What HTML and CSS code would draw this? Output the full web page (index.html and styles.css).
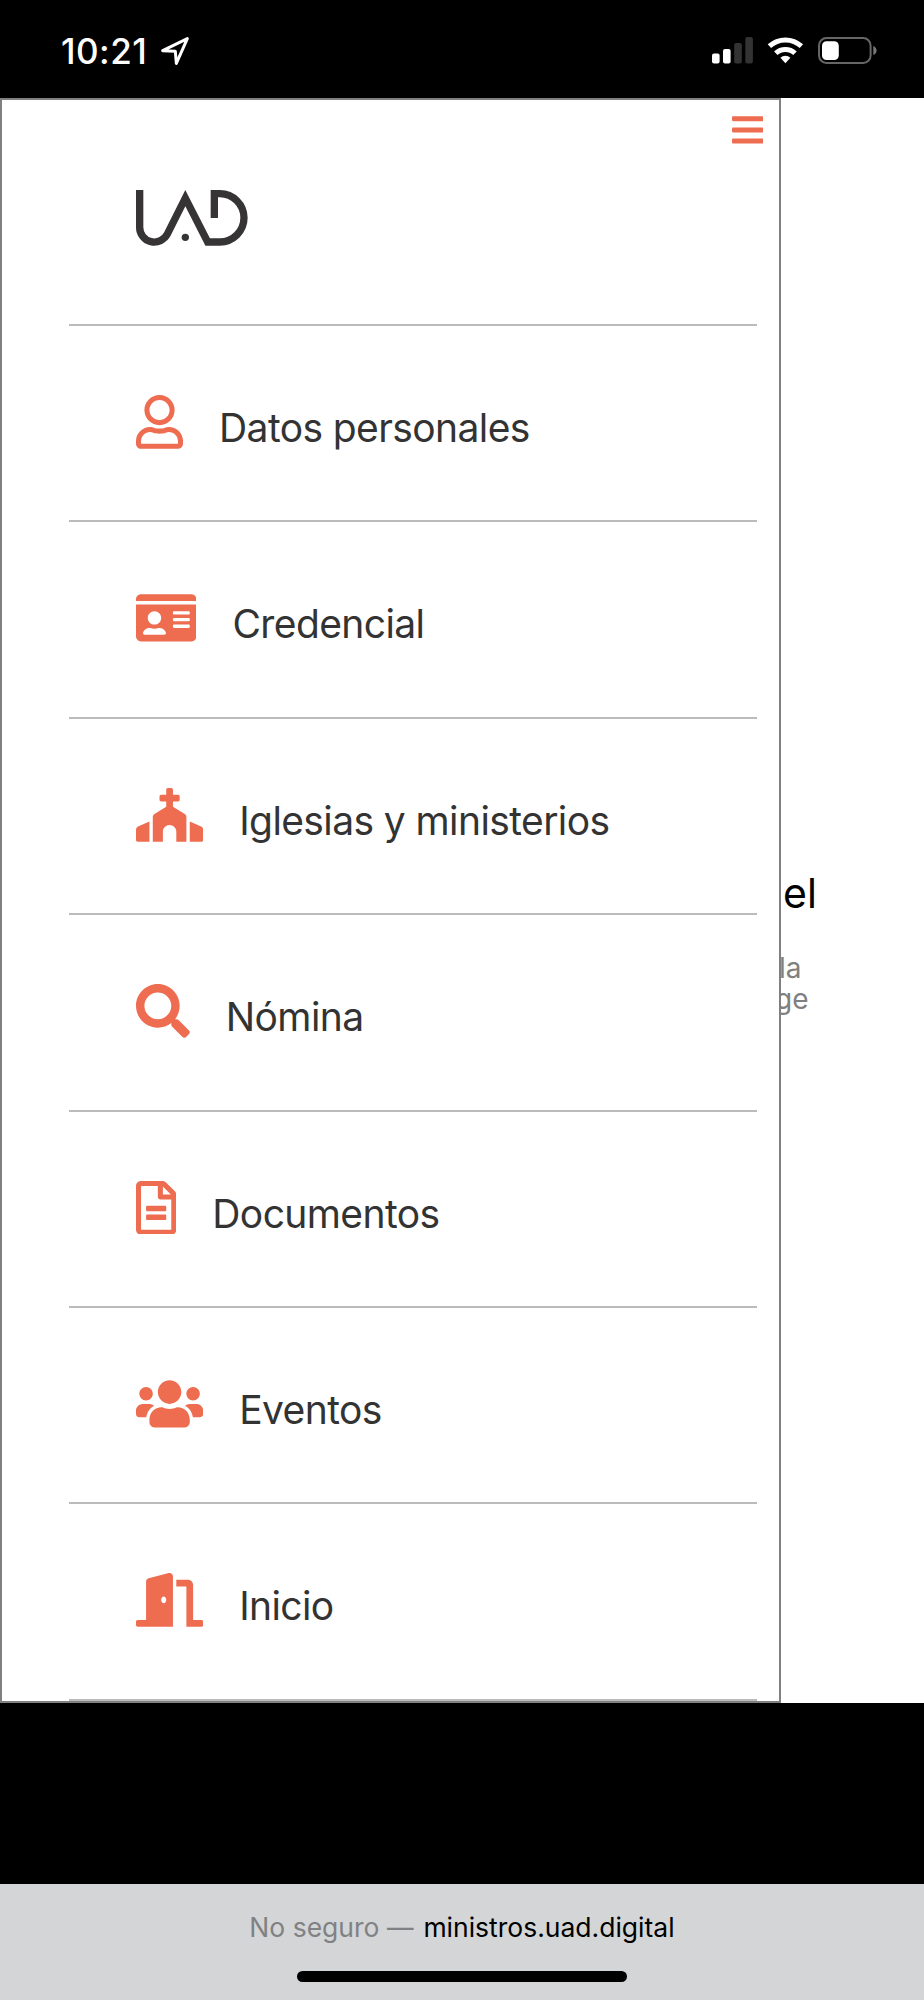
FILE: index.html
```html
<!DOCTYPE html>
<html lang="es">
<head>
<meta charset="utf-8">
<title>Ministros UAD</title>
<link rel="stylesheet" href="styles.css">
</head>
<body>
<header class="status">
  <span class="time">10:21</span>
  <svg class="locate" viewBox="0 0 90 90"><path d="M8 44 L82 8 L49 82 L46 46 Z" fill="none" stroke="#fff" stroke-width="9" stroke-linejoin="round"/></svg>
  <svg class="signals" viewBox="0 0 166 28">
    <g fill="#fff"><rect x="0" y="16.5" width="7.6" height="10" rx="2"/><rect x="11" y="12" width="7.6" height="14.5" rx="2"/></g>
    <g fill="#333"><rect x="22.2" y="6" width="7.6" height="20.5" rx="2"/><rect x="33.3" y="0" width="7.6" height="26.5" rx="2"/></g>
    <g fill="none" stroke="#fff" stroke-width="5"><path d="M57.4 9.2 A23.5 23.5 0 0 1 89.4 9.2"/><path d="M63.8 16.2 A14 14 0 0 1 83 16.2"/></g>
    <path d="M73.4 26.2 L68.4 20.7 A7.5 7.5 0 0 1 78.4 20.7 Z" fill="#fff"/>
    <rect x="107" y="1" width="51.6" height="25" rx="7.5" fill="none" stroke="#666" stroke-width="2"/>
    <rect x="110" y="4.2" width="16.8" height="18.8" rx="4.5" fill="#fff"/>
    <path d="M161.3 9 Q164.6 10.5 164.6 13.5 T161.3 18 Z" fill="#777"/>
  </svg>
</header>
<main class="page">
  <section class="behind">
    <h1 class="behind-title">el</h1>
    <p class="behind-text"><span class="line line-first">la</span><span class="line">ge</span></p>
  </section>
  <nav class="drawer">
    <div class="drawer-top">
      <svg class="bars" viewBox="0 0 448 512"><rect y="60" width="448" height="72" rx="16"/><rect y="220" width="448" height="72" rx="16"/><rect y="380" width="448" height="72" rx="16"/></svg>
      <svg class="logo" viewBox="259 90 336 168"><path d="M270 90 V202 A44 44 0 0 0 353.3 221.9 L407 114.5 L474 246 H510.5 A72.5 72.5 0 0 0 510.5 101 H494 V174" fill="none" stroke="#373435" stroke-width="22"/><circle cx="407" cy="232" r="11" fill="#373435"/></svg>
    </div>
    <ul class="menu">
      <li class="item"><svg class="icon" viewBox="0 0 448 512"><path d="M313.6 304c-28.7 0-42.5 16-89.6 16-47.1 0-60.8-16-89.6-16C60.2 304 0 364.2 0 438.4V464c0 26.5 21.5 48 48 48h352c26.5 0 48-21.5 48-48v-25.6c0-74.2-60.2-134.4-134.4-134.4zM400 464H48v-25.6c0-47.6 38.8-86.4 86.4-86.4 14.6 0 38.3 16 89.6 16 51.7 0 74.9-16 89.6-16 47.6 0 86.4 38.8 86.4 86.4V464zM224 288c79.5 0 144-64.5 144-144S303.5 0 224 0 80 64.5 80 144s64.5 144 144 144zm0-240c52.9 0 96 43.1 96 96s-43.1 96-96 96-96-43.1-96-96 43.1-96 96-96z"/></svg><span class="label">Datos personales</span></li>
      <li class="item"><svg class="icon" viewBox="0 0 576 512"><path d="M528 32H48C21.5 32 0 53.5 0 80v16h576V80c0-26.5-21.5-48-48-48zM0 432c0 26.5 21.5 48 48 48h480c26.5 0 48-21.5 48-48V128H0v304zm352-232c0-4.400 3.600-8 8-8h144c4.400 0 8 3.600 8 8v16c0 4.400-3.600 8-8 8H360c-4.400 0-8-3.600-8-8v-16zm0 64c0-4.400 3.600-8 8-8h144c4.400 0 8 3.600 8 8v16c0 4.400-3.600 8-8 8H360c-4.400 0-8-3.600-8-8v-16zm0 64c0-4.400 3.600-8 8-8h144c4.400 0 8 3.600 8 8v16c0 4.400-3.600 8-8 8H360c-4.400 0-8-3.600-8-8v-16zM176 192c35.300 0 64 28.700 64 64s-28.700 64-64 64-64-28.700-64-64 28.700-64 64-64zM67.100 396.200C75.500 370.500 99.600 352 128 352h8.200c12.300 5.100 25.700 8 39.800 8s27.600-2.900 39.800-8h8.200c28.400 0 52.500 18.500 60.900 44.200 3.200 9.900-5.200 19.800-15.600 19.800H82.700c-10.400 0-18.800-10-15.600-19.800z"/></svg><span class="label">Credencial</span></li>
      <li class="item"><svg class="icon" viewBox="0 0 640 512"><path d="M464.46 246.68L352 179.2V128h48c8.84 0 16-7.16 16-16V80c0-8.84-7.16-16-16-16h-48V16c0-8.84-7.16-16-16-16h-32c-8.84 0-16 7.16-16 16v48h-48c-8.84 0-16 7.16-16 16v32c0 8.84 7.16 16 16 16h48v51.2l-112.46 67.48A31.997 31.997 0 0 0 160 274.12V512h96v-96c0-35.35 28.65-64 64-64s64 28.65 64 64v96h96V274.12c0-11.24-5.9-21.66-15.54-27.44zM0 395.96V496c0 8.84 7.16 16 16 16h112V320L19.39 366.54A32.024 32.024 0 0 0 0 395.96zm620.61-29.42L512 320v192h112c8.84 0 16-7.16 16-16V395.96c0-12.8-7.63-24.37-19.39-29.42z"/></svg><span class="label">Iglesias y ministerios</span></li>
      <li class="item"><svg class="icon" viewBox="0 0 512 512"><path d="M505 442.7L405.3 343c-4.5-4.5-10.6-7-17-7H372c27.6-35.3 44-79.7 44-128C416 93.1 322.9 0 208 0S0 93.1 0 208s93.1 208 208 208c48.3 0 92.7-16.4 128-44v16.3c0 6.4 2.5 12.5 7 17l99.700 99.700c9.400 9.400 24.600 9.400 33.900 0l28.300-28.300c9.400-9.400 9.400-24.600.1-34zM208 336c-70.7 0-128-57.2-128-128 0-70.7 57.2-128 128-128 70.7 0 128 57.2 128 128 0 70.7-57.2 128-128 128z"/></svg><span class="label">Nómina</span></li>
      <li class="item"><svg class="icon" viewBox="0 0 384 512"><path d="M288 248v28c0 6.600-5.400 12-12 12H108c-6.600 0-12-5.400-12-12v-28c0-6.600 5.400-12 12-12h168c6.600 0 12 5.400 12 12zm-12 72H108c-6.600 0-12 5.400-12 12v28c0 6.600 5.400 12 12 12h168c6.600 0 12-5.400 12-12v-28c0-6.600-5.400-12-12-12zm108-188.100V464c0 26.500-21.500 48-48 48H48c-26.500 0-48-21.500-48-48V48C0 21.500 21.500 0 48 0h204.100C264.800 0 277 5.100 286 14.100L369.900 98c9 8.900 14.100 21.200 14.100 33.900zm-128-80V128h76.100L256 51.900zM336 464V176H232c-13.300 0-24-10.700-24-24V48H48v416h288z"/></svg><span class="label">Documentos</span></li>
      <li class="item"><svg class="icon" viewBox="0 0 640 512"><path d="M96 224c35.300 0 64-28.700 64-64s-28.700-64-64-64-64 28.700-64 64 28.700 64 64 64zm448 0c35.300 0 64-28.700 64-64s-28.700-64-64-64-64 28.700-64 64 28.700 64 64 64zm32 32h-64c-17.600 0-33.500 7.100-45.100 18.600 40.300 22.100 68.900 62 75.100 109.400h66c17.700 0 32-14.300 32-32v-32c0-35.300-28.700-64-64-64zm-256 0c61.900 0 112-50.100 112-112S381.900 32 320 32 208 82.100 208 144s50.100 112 112 112zm76.800 32h-8.300c-20.800 10-43.900 16-68.500 16s-47.600-6-68.500-16h-8.300C179.600 288 128 339.600 128 403.200V432c0 26.500 21.500 48 48 48h288c26.500 0 48-21.500 48-48v-28.800c0-63.600-51.600-115.200-115.200-115.200zm-223.700-13.400C161.500 263.100 145.600 256 128 256H64c-35.300 0-64 28.700-64 64v32c0 17.700 14.300 32 32 32h65.900c6.300-47.400 34.900-87.300 75.200-109.400z"/></svg><span class="label">Eventos</span></li>
      <li class="item"><svg class="icon" viewBox="0 0 640 512"><path d="M624 448h-80V113.450C544 86.190 522.470 64 496 64H384v64h96v384h144c8.840 0 16-7.160 16-16v-32c0-8.840-7.160-16-16-16zM312.240 1.010l-192 49.740C105.990 54.440 96 67.700 96 82.920V448H16c-8.840 0-16 7.160-16 16v32c0 8.840 7.160 16 16 16h336V33.180c0-21.580-19.560-37.410-39.760-32.170zM264 288c-13.250 0-24-14.330-24-32s10.750-32 24-32 24 14.330 24 32-10.750 32-24 32z"/></svg><span class="label">Inicio</span></li>
    </ul>
  </nav>
</main>
<footer class="browser-bar">
  <p class="address"><span class="insecure">No seguro —</span><span class="domain">ministros.uad.digital</span></p>
  <div class="home"></div>
</footer>
</body>
</html>
```
FILE: styles.css
```css
* { box-sizing: border-box; }
body {
  margin: 0;
  width: 924px;
  height: 2000px;
  display: flex;
  flex-direction: column;
  overflow: hidden;
  background: #000;
  font-family: Inter, "Liberation Sans", sans-serif;
}
svg { display: block; flex: none; }
.status {
  height: 98px;
  display: flex;
  align-items: flex-start;
  padding: 37px 46px 0 61px;
  color: #fff;
}
.time {
  width: 99px;
  font-size: 35px;
  font-weight: 500;
  line-height: 28px;
  letter-spacing: 0.5px;
}
.locate { width: 30px; height: 30px; margin-top: -1px; }
.signals { width: 166px; height: 28px; margin-left: auto; }
.page {
  position: relative;
  height: 1605px;
  background: #fff;
}
.behind { padding: 770px 0 0 783px; }
.behind-title {
  margin: 0;
  font-size: 41px;
  font-weight: 400;
  line-height: 50px;
}
.behind-text {
  margin: 35px 0 0 -8px;
  font-size: 28px;
  line-height: 31px;
  color: #808080;
}
.line { display: block; }
.line-first { padding-left: 4px; }
.drawer {
  position: absolute;
  inset: 0 auto 0 0;
  width: 781px;
  padding: 0 22px 0 67px;
  border: 2px solid #808080;
  overflow: hidden;
  background: #fff;
}
.drawer-top { height: 224px; display: flex; flex-direction: column; }
.bars {
  width: 31.3px;
  height: 35.8px;
  margin: 11.500px -6px 0 auto;
  fill: #ee6c50;
}
.logo { width: 112px; height: 56px; margin: 42.700px 0 0 67px; }
.menu { margin: 0; padding: 0; list-style: none; border-bottom: 2px solid #bbb; }
.item {
  height: 196.4px;
  display: flex;
  align-items: flex-start;
  gap: 36px;
  padding: 69px 0 0 67px;
  border-top: 2px solid #bbb;
}
.icon { height: 53.75px; fill: #ee6c50; }
.label {
  margin-top: 8px;
  font-size: 39px;
  line-height: 50px;
  letter-spacing: -0.6px;
  white-space: nowrap;
  color: #333;
}
.browser-bar {
  height: 116px;
  margin-top: auto;
  display: flex;
  flex-direction: column;
  align-items: center;
  background: #d4d5d7;
}
.address {
  display: flex;
  gap: 10px;
  margin: 27px 0 0;
  font-size: 26.5px;
  line-height: 32px;
  white-space: nowrap;
}
.insecure { color: #808184; }
.domain { color: #000; }
.home { width: 330px; height: 11px; margin-top: 28px; border-radius: 6px; background: #000; }
```
